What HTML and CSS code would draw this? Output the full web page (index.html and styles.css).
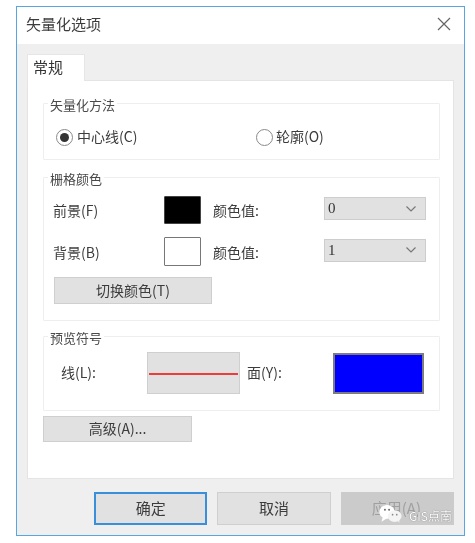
FILE: index.html
```html
<!DOCTYPE html>
<html lang="zh">
<head>
<meta charset="utf-8">
<title>矢量化选项</title>
<link rel="stylesheet" href="styles.css">
</head>
<body>
<div class="window">
  <header class="titlebar">
    <span class="title">矢量化选项</span>
    <svg class="close" width="14" height="14" viewBox="0 0 14 14"><path d="M1 1L13 13M13 1L1 13" stroke="#666" stroke-width="1.2" fill="none"/></svg>
  </header>
  <div class="content">
    <div class="tab">常规</div>
    <div class="panel">
      <fieldset class="group group-method">
        <legend>矢量化方法</legend>
        <div class="radios">
          <label class="radio radio-first"><span class="dot on"></span>中心线(C)</label>
          <label class="radio"><span class="dot"></span>轮廓(O)</label>
        </div>
      </fieldset>
      <fieldset class="group group-color">
        <legend>栅格颜色</legend>
        <div class="color-grid">
          <span>前景(F)</span>
          <span class="swatch black"></span>
          <span class="value-label">颜色值:</span>
          <div class="select"><span>0</span><svg width="12" height="8" viewBox="0 0 12 8"><path d="M1.5 1.5L6 6L10.5 1.5" stroke="#777" stroke-width="1.2" fill="none"/></svg></div>
          <span>背景(B)</span>
          <span class="swatch white"></span>
          <span class="value-label">颜色值:</span>
          <div class="select"><span>1</span><svg width="12" height="8" viewBox="0 0 12 8"><path d="M1.5 1.5L6 6L10.5 1.5" stroke="#777" stroke-width="1.2" fill="none"/></svg></div>
        </div>
        <div class="btn btn-switch">切换颜色(T)</div>
      </fieldset>
      <fieldset class="group group-preview">
        <legend>预览符号</legend>
        <div class="preview-row">
          <span class="line-label">线(L):</span>
          <div class="line-box"><span class="red-line"></span></div>
          <span class="fill-label">面(Y):</span>
          <div class="fill-box"></div>
        </div>
      </fieldset>
      <div class="btn btn-adv">高级(A)...</div>
    </div>
    <footer class="actions">
      <div class="btn btn-action btn-default">确定</div>
      <div class="btn btn-action">取消</div>
      <div class="btn btn-action btn-disabled">应用(A)</div>
    </footer>
  </div>
  <div class="watermark">
    <svg width="25" height="20" viewBox="0 0 36 28"><ellipse cx="13" cy="11" rx="11" ry="10" fill="#fff"/><path d="M7 18L5 25L13 20Z" fill="#fff"/><ellipse cx="24" cy="17" rx="10" ry="8.5" fill="#f4f4f4"/><path d="M28 23L31 27L30 20Z" fill="#f4f4f4"/><circle cx="10" cy="8" r="1.4" fill="#666"/><circle cx="16" cy="8" r="1.4" fill="#666"/><circle cx="21" cy="15" r="1.2" fill="#888"/><circle cx="27" cy="15" r="1.2" fill="#888"/></svg>
    <span class="wm-text">GIS点南</span>
  </div>
</div>
</body>
</html>
```

FILE: styles.css
```css
* { box-sizing: border-box; }
html, body { margin: 0; padding: 0; background: #fff; }
body {
  font-family: "Noto Sans CJK SC", "Liberation Sans", sans-serif;
  font-size: 14px;
  color: #3c3c3c;
  overflow: hidden;
}
.window {
  position: relative;
  width: 449px;
  height: 530px;
  margin: 6px 0 0 16px;
  border: 1px solid #58a5e2;
  display: flex;
  flex-direction: column;
  filter: blur(0.45px);
}
.titlebar {
  height: 37px;
  flex: none;
  background: #fff;
  display: flex;
  align-items: center;
  justify-content: space-between;
  padding: 0 13px 4px 9px;
}
.title { font-size: 15px; color: #3c3c3c; }
.content {
  flex: 1;
  background: #efefef;
  padding: 10px 10px 0;
  display: flex;
  flex-direction: column;
}
.tab {
  width: 58px;
  height: 27px;
  margin-bottom: -1px;
  padding-left: 5px;
  background: #fff;
  border: 1px solid #e6e6e6;
  border-bottom: 0;
  font-size: 15px;
  line-height: 23px;
  color: #333;
  position: relative;
  z-index: 1;
}
.panel {
  width: 427px;
  height: 399px;
  background: #fff;
  border: 1px solid #e4e4e4;
  padding: 13px 0 0 15px;
}
.group {
  width: 397px;
  min-width: 0;
  margin: 0;
  padding: 0;
  border: 1px solid #eeeeee;
  border-radius: 1px;
}
.group legend {
  margin-left: 4px;
  padding: 0 2px;
  height: 18px;
  line-height: 21px;
  font-size: 13px;
  color: #4a4a4a;
}
.group-method { height: 66px; }
.radios { display: flex; align-items: center; height: 47px; padding: 1px 0 0 12px; }
.radio { display: flex; align-items: center; }
.radio-first { width: 200px; }
.dot {
  width: 17px;
  height: 17px;
  border: 1.5px solid #8a8a8a;
  border-radius: 50%;
  background: #fff;
  display: flex;
  align-items: center;
  justify-content: center;
  margin-top: 2px;
}
.dot.on::before {
  content: "";
  width: 9px;
  height: 9px;
  border-radius: 50%;
  background: #333;
}
.radio-first .dot { margin-right: 4px; }
.radio:not(.radio-first) .dot { margin-right: 3px; }

.group-color { height: 153px; margin-top: 8px; }
.color-grid {
  display: grid;
  grid-template-columns: 111px 37px 123px 102px;
  grid-template-rows: 28px 29px;
  row-gap: 13px;
  align-items: center;
  padding: 10px 0 0 9px;
}
.swatch { display: block; width: 37px; height: 28px; border-radius: 1px; }
.swatch.black { background: #000; border: 1px solid #444; }
.swatch.white { background: #fff; border: 1.5px solid #777; height: 29px; }
.value-label { margin-left: 12px; }
.select {
  height: 23px;
  background: #e1e1e1;
  border: 1px solid #cdcdcd;
  display: flex;
  align-items: center;
  justify-content: space-between;
  padding: 0 8px 0 3px;
  font-family: "Liberation Serif", serif;
  font-size: 15px;
  color: #333;
  margin-top: -3px;
}
.btn {
  background: #e1e1e1;
  border: 1px solid #cfcfcf;
  display: flex;
  align-items: center;
  justify-content: center;
  padding-bottom: 2px;
}
.btn-switch { width: 158px; height: 27px; margin: 11px 0 0 10px; }

.group-preview { height: 84px; margin-top: 6px; }
.preview-row { display: flex; align-items: center; padding: 7px 0 0 17px; }
.line-label { width: 86px; margin-top: -2px; }
.line-box {
  width: 93px;
  height: 42px;
  background: #e1e1e1;
  border: 1px solid #cfcfcf;
  display: flex;
  align-items: center;
  padding: 1px 1px 0;
}
.red-line { display: block; width: 100%; height: 2px; background: #ee3c3c; }
.fill-label { width: 86px; margin: -2px 0 0 7px; }
.fill-box {
  width: 91px;
  height: 41px;
  background: #0000ff;
  border: 2px solid #7d7d7d;
}
.btn-adv { width: 149px; height: 26px; margin-top: 5px; }

.actions { display: flex; gap: 10px; margin: 13px 0 0 67px; }
.btn-action {
  width: 114px;
  height: 33px;
  font-size: 15px;
  color: #3c3c3c;
}
.btn-default { border: 2px solid #3a8fdc; }
.btn-disabled { background: #cbcbcb; border-color: #cbcbcb; color: #a0a0a0; padding-right: 2px; }

.watermark {
  position: absolute;
  left: 361px;
  top: 497px;
  display: flex;
  align-items: center;
  gap: 6px;
  white-space: nowrap;
}
.wm-text { font-size: 12px; line-height: 14px; margin-top: 4px; color: #fff; text-shadow: 0 0 1px #555; }
```
